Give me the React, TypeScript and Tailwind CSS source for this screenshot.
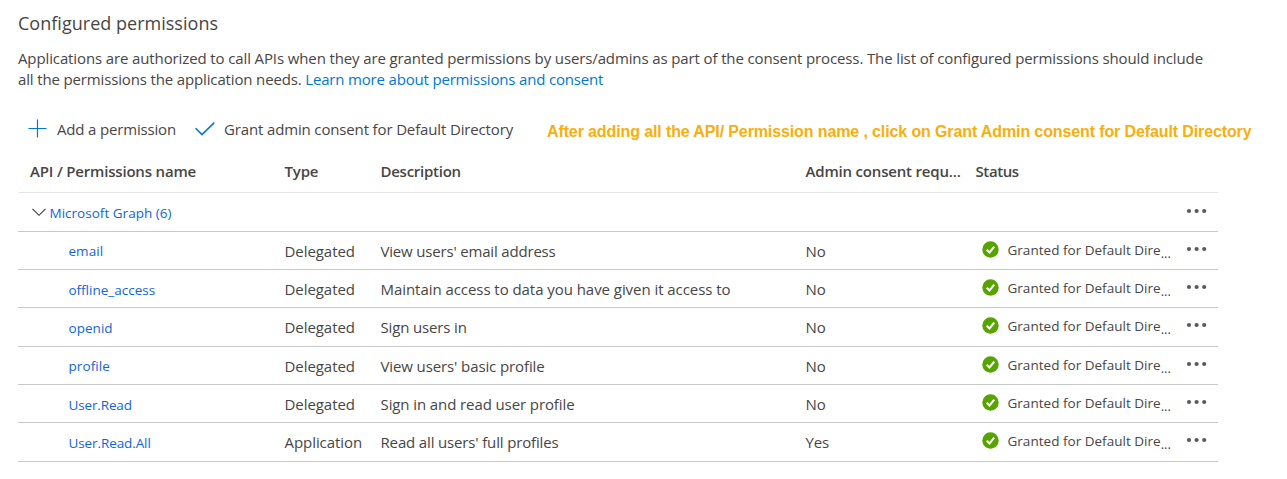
type Permission = {
  name: string;
  type: string;
  description: string;
  consent: string;
  nameClass: string;
  descClass: string;
  rowClass: string;
};

const permissions: Permission[] = [
  { name: 'email', type: 'Delegated', description: "View users' email address", consent: 'No', nameClass: 'tracking-[0.04px]', descClass: 'tracking-[-0.18px]', rowClass: 'h-[38px]' },
  { name: 'offline_access', type: 'Delegated', description: 'Maintain access to data you have given it access to', consent: 'No', nameClass: 'pt-[2px] tracking-[0px]', descClass: 'tracking-[-0.053px]', rowClass: 'h-[38px]' },
  { name: 'openid', type: 'Delegated', description: 'Sign users in', consent: 'No', nameClass: 'pt-[2px] tracking-[0.04px]', descClass: 'tracking-[-0.15px]', rowClass: 'h-[39px] pb-px' },
  { name: 'profile', type: 'Delegated', description: "View users' basic profile", consent: 'No', nameClass: 'tracking-[0.08px]', descClass: 'tracking-[-0.11px]', rowClass: 'h-[38px]' },
  { name: 'User.Read', type: 'Delegated', description: 'Sign in and read user profile', consent: 'No', nameClass: 'pt-[2px] tracking-[-0.14px]', descClass: 'tracking-[-0.1px]', rowClass: 'h-[38px]' },
  { name: 'User.Read.All', type: 'Application', description: "Read all users' full profiles", consent: 'Yes', nameClass: 'pt-[2px] tracking-[-0.1px]', descClass: 'tracking-[-0.15px]', rowClass: 'h-[39px] pb-px' },
];

const columns = 'grid grid-cols-[266.5px_96px_425px_170px_198.5px_44px] items-center';

function MoreIcon() {
  return (
    <svg width="22" height="6" viewBox="0 0 22 6" fill="#5a5a5a">
      <circle cx="3" cy="3" r="2.1" />
      <circle cx="10.6" cy="3" r="2.1" />
      <circle cx="18.2" cy="3" r="2.1" />
    </svg>
  );
}

function GrantedIcon() {
  return (
    <svg width="17" height="17" viewBox="0 0 17 17" className="shrink-0">
      <circle cx="8.5" cy="8.5" r="8.2" fill="#57a300" />
      <path d="M4.7 8.7 L7.5 11.5 L12.3 5.7" fill="none" stroke="#fff" strokeWidth="2.1" />
    </svg>
  );
}

export default function App() {
  return (
    <main className="h-[479px] w-full overflow-hidden bg-white pl-[18px] font-['Open_Sans','Noto_Sans',sans-serif] text-[15px] text-[#474645]">
      <h1 className="pt-[11px] text-[18px] leading-[24px] tracking-[0.02px]">Configured permissions</h1>
      <div className="pt-[13px] leading-[21px] whitespace-nowrap">
        <p className="tracking-[-0.12px]">
          Applications are authorized to call APIs when they are granted permissions by users/admins as part of the consent process. The list of configured permissions should include
        </p>
        <p className="tracking-[-0.145px]">
          all the permissions the application needs. <a className="tracking-[-0.18px] text-[#0078d4]">Learn more about permissions and consent</a>
        </p>
      </div>

      <div className="mt-[29px] flex h-[20px] items-center whitespace-nowrap leading-[20px]">
        <svg width="20" height="20" viewBox="0 0 20 20" className="ml-[10px] shrink-0" stroke="#0078d4" strokeWidth="1.2" fill="none">
          <path d="M9.5 0.5V18.5M0.5 9.5H18.5" />
        </svg>
        <span className="ml-[9px] w-[119px] tracking-[-0.167px]">Add a permission</span>
        <svg width="20" height="14" viewBox="0 0 20 14" className="ml-[19px] shrink-0" stroke="#0078d4" strokeWidth="1.6" fill="none">
          <path d="M0.6 6.2L7 12.6L19.3 0.6" />
        </svg>
        <span className="ml-[9px] w-[290px] tracking-[-0.145px]">Grant admin consent for Default Directory</span>
        <strong className="ml-[33px] pt-[5px] font-['Liberation_Sans',sans-serif] text-[16px] leading-[20px] font-bold tracking-[-0.116px] text-[#f9ae0c]">
          After adding all the API/ Permission name , click on Grant Admin consent for Default Directory
        </strong>
      </div>

      <section className="mt-[13px] w-[1200px] whitespace-nowrap">
        <div className={`${columns} h-[41px] border-b border-[#e6e6e6] pb-[2px] font-semibold leading-[20px] tracking-[-0.184px]`}>
          <span className="pl-[12px]">API / Permissions name</span>
          <span>Type</span>
          <span className="tracking-[-0.26px]">Description</span>
          <span>Admin consent requ...</span>
          <span className="tracking-[-0.4px]">Status</span>
        </div>
        <div className="flex h-[39px] items-center border-b border-[#c8c8c8]">
          <svg width="14" height="9" viewBox="0 0 14 9" className="ml-[14px]" stroke="#3b3a39" strokeWidth="1.1" fill="none">
            <path d="M0.5 0.8L7 7.3L13.5 0.8" />
          </svg>
          <a className="ml-[3.5px] pt-[2px] text-[13.5px] leading-[20px] tracking-[0.02px] text-[#1264dd]">Microsoft Graph (6)</a>
          <span className="mr-[10px] ml-auto pb-[3px]"><MoreIcon /></span>
        </div>
        {permissions.map((p) => (
          <div key={p.name} className={`${columns} ${p.rowClass} border-b border-[#c8c8c8] leading-[20px]`}>
            <a className={`${p.nameClass} pl-[50.5px] text-[13.5px] text-[#1264dd]`}>{p.name}</a>
            <span className="tracking-[-0.06px]">{p.type}</span>
            <span className={p.descClass}>{p.description}</span>
            <span className="tracking-[-0.1px]">{p.consent}</span>
            <span className="flex items-center pb-[2px] pl-[6px]">
              <GrantedIcon />
              <span className="ml-[9px] text-[13.5px] tracking-[0.02px]">Granted for Default Dire</span>
              <span className="pt-[6px] text-[13px] tracking-[0px]">...</span>
            </span>
            <span className="pb-[3px] pl-[12px]"><MoreIcon /></span>
          </div>
        ))}
      </section>
    </main>
  );
}
